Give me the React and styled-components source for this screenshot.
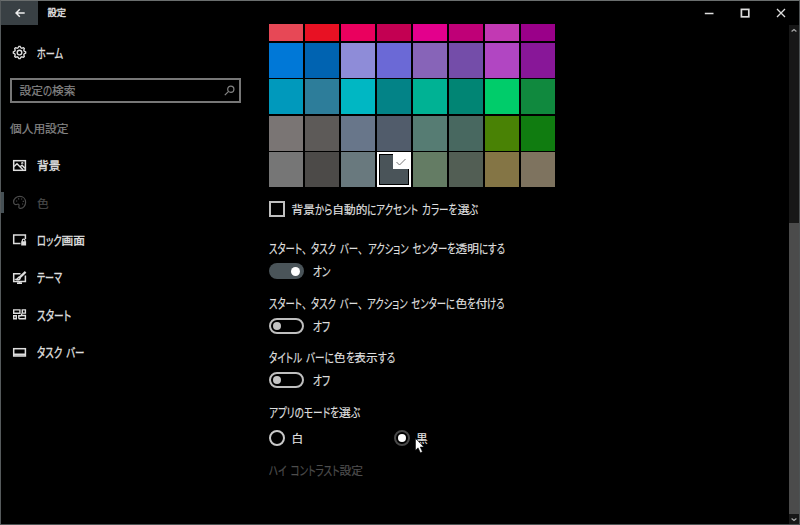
import React, { useLayoutEffect, useRef } from "react";
import styled, { createGlobalStyle } from "styled-components";

const Global = createGlobalStyle`
  * { box-sizing: border-box; }
  body { margin: 0; background: #000; overflow: hidden; }
`;

const Window = styled.div`
  width: 800px;
  height: 525px;
  display: flex;
  flex-direction: column;
  background: #000;
  color: #dedede;
  border: 1px solid #4d5253;
  border-top-color: #6a6e6e;
  border-left-color: #555a5c;
  font-family: "Noto Sans CJK JP", sans-serif;
  font-size: 11.7px;
  line-height: 16px;
  overflow: hidden;
  cursor: default;
`;

const TitleBar = styled.header`
  height: 23px;
  flex: none;
  display: flex;
  align-items: flex-start;
`;

const BackButton = styled.button`
  width: 37px;
  height: 24px;
  padding: 0;
  border: 0;
  background: #394044;
  display: grid;
  place-items: center;
`;

const WindowTitle = styled.div`
  margin: 3px 0 0 9.5px;
  flex: 1;
  font-size: 9.3px;
`;

const CaptionButton = styled.button`
  width: 36px;
  height: 24px;
  padding: 0;
  border: 0;
  background: none;
  display: grid;
  place-items: center;
`;

const Body = styled.div`
  flex: 1;
  min-height: 0;
  display: flex;
`;

const Sidebar = styled.nav`
  width: 268px;
  flex: none;
  padding-top: 10px;
`;

const NavItem = styled.div`
  height: 37.4px;
  display: flex;
  align-items: center;
  gap: 10px;
  padding-left: 8px;
  border-left: 3px solid transparent;
  border-image: ${(p) =>
    p.$active
      ? "linear-gradient(transparent 24%, #465055 24%, #465055 76%, transparent 76%) 1"
      : "none"};
  color: ${(p) => (p.$active ? "#4b4b4b" : "#dedede")};

  svg { width: 15px; height: 15px; flex: none; }
`;

const SearchBox = styled.div`
  width: 231px;
  height: 25px;
  margin: 6.6px 0 0 9px;
  padding: 0 4px 0 7.5px;
  border: 2px solid #777;
  display: flex;
  align-items: center;
  justify-content: space-between;
  color: #858585;
`;

const SectionTitle = styled.div`
  margin: 17px 0 10.5px 9px;
  color: #858585;
`;

const Content = styled.main`
  width: 520px;
  flex: none;
  overflow: hidden;
`;

const Palette = styled.div`
  width: 286px;
  display: grid;
  grid-template-columns: repeat(8, 1fr);
  grid-template-rows: 17px repeat(4, 35px);
  gap: 1.5px;
`;

const Swatch = styled.div`
  background: ${(p) => p.$color};
  ${(p) => p.$selected && "border: 2px solid #fff; outline: 1px solid #000; outline-offset: -3px;"}
  display: flex;
  justify-content: flex-end;
  align-items: flex-start;
`;

const CheckCorner = styled.span`
  width: 16px;
  height: 15px;
  background: #fff;
  display: grid;
  place-items: center;
  z-index: 1;
`;

const CheckRow = styled.label`
  height: 16px;
  margin: 14px 0 23px;
  display: flex;
  align-items: center;
  gap: 6.5px;
`;

const CheckBox = styled.span`
  width: 16px;
  height: 16px;
  border: 2px solid #bfbfbf;
`;

const Setting = styled.section`
  height: 54.5px;
`;

const ToggleRow = styled.div`
  display: flex;
  align-items: center;
  height: 16px;
  gap: 9px;
  margin-top: 7px;
`;

const Toggle = styled.span`
  width: 35px;
  height: 16px;
  border-radius: 8px;
  display: flex;
  align-items: center;
  justify-content: ${(p) => (p.$on ? "flex-end" : "flex-start")};
  padding: 0 ${(p) => (p.$on ? "4px" : "2px")};
  background: ${(p) => (p.$on ? "#4a5459" : "transparent")};
  border: ${(p) => (p.$on ? "0" : "2px solid #bfbfbf")};

  &::after {
    content: "";
    width: ${(p) => (p.$on ? 9 : 8)}px;
    height: ${(p) => (p.$on ? 9 : 8)}px;
    border-radius: 50%;
    background: ${(p) => (p.$on ? "#fff" : "#c4c4c4")};
  }
`;

const Radios = styled.div`
  display: flex;
  margin-top: 10px;
`;

const RadioItem = styled.label`
  width: 124.5px;
  height: 16px;
  display: flex;
  align-items: center;
  gap: 6.5px;
  position: relative;
`;

const Radio = styled.span`
  width: 16px;
  height: 16px;
  border-radius: 50%;
  border: 2px solid ${(p) => (p.$checked ? "#484848" : "#c9c9c9")};
  display: grid;
  place-items: center;

  &::after {
    content: "";
    width: 8px;
    height: 8px;
    border-radius: 50%;
    background: ${(p) => (p.$checked ? "#fff" : "transparent")};
  }
`;

const Pointer = styled.svg`
  position: absolute;
  left: 21px;
  top: 8px;
  width: 10px;
  height: 16px;
`;

const ContrastLink = styled.div`
  margin-top: 16px;
  color: #4e4e4e;
`;

const ScrollBar = styled.div`
  width: 10px;
  margin-top: 1px;
  display: flex;
  flex-direction: column;
  background: #171717;
`;

const ScrollArrow = styled.span`
  height: 10px;
  display: grid;
  place-items: center;
  background: #171717;
`;

const ScrollThumb = styled.span`
  flex: 1;
  margin-top: 188px;
  background: #4b4b4b;
`;

const TextLine = styled.span`
  display: flex;
  width: ${(p) => p.$width}px;
  white-space: pre;
  height: 16px;
  -webkit-text-stroke: ${(p) => (p.$heavy ? 0.4 : 0.22)}px currentColor;
`;

const Run = styled.span`
  display: block;
  flex: none;
  transform-origin: 0 50%;
  ${(p) => p.$kana && "font-size: 12.7px; word-spacing: 2.5px;"}
  font-feature-settings: ${(p) => (p.$tight ? '"palt"' : "normal")};
`;

// UI Japanese typesetting: ideographs keep their full width, kana and
// punctuation are condensed so that the line takes exactly the given width.
function Text({ children, width, heavy }) {
  const line = useRef(null);
  const runs = children.match(/、|[\u3003-\u30ff ]+|[^\u3000-\u30ff ]+/g);
  useLayoutEffect(() => {
    const kana = [];
    let fixed = 0;
    let loose = 0;
    for (const el of line.current.children) {
      el.style.width = "auto";
      el.style.transform = "none";
      const w = el.getBoundingClientRect().width;
      if (el.dataset.kana) {
        kana.push([el, w]);
        loose += w;
      } else fixed += w;
    }
    const scale = loose ? (width - fixed) / loose : 1;
    for (const [el, w] of kana) {
      el.style.width = `${w * scale}px`;
      el.style.transform = `scaleX(${scale})`;
    }
  }, [children, width]);
  return (
    <TextLine ref={line} $width={width} $heavy={heavy}>
      {runs.map((r, i) => {
        const kana = /[\u3000-\u30ff ]/.test(r[0]);
        return (
          <Run key={i} $kana={kana} $tight={kana && r !== "、"} data-kana={kana ? "1" : undefined}>
            {r}
          </Run>
        );
      })}
    </TextLine>
  );
}

const Icon = ({ children, w = 1.5 }) => (
  <svg viewBox="0 0 15 15" fill="none" stroke="currentColor" strokeWidth={w}>
    {children}
  </svg>
);

const gearPath = Array.from({ length: 32 }, (_, i) => {
  const r = i % 4 < 2 ? 6.2 : 4.9;
  const a = ((i - 0.5) / 32) * Math.PI * 2;
  return `${i ? "L" : "M"}${(7.5 + r * Math.cos(a)).toFixed(2)} ${(7.5 + r * Math.sin(a)).toFixed(2)}`;
}).join("") + "Z";

const HomeIcon = () => (
  <Icon w={1.35}>
    <path d={gearPath} />
    <circle cx="7.5" cy="7.5" r="2.3" />
  </Icon>
);
const PictureIcon = () => (
  <Icon>
    <rect x="1.7" y="2.7" width="11.7" height="9.6" />
    <path d="M2 8.5 5 5.7l6 6.1M8.2 8.8l1.8-1.6 3 3" />
    <circle cx="10.3" cy="5.2" r=".4" />
  </Icon>
);
const PaletteIcon = () => (
  <Icon w={1.2}>
    <path d="M1.6 7C1.6 3.8 4.4 1.4 7.8 1.4s5.8 2.5 5.8 5.8c0 3.4-2.5 6.2-5 6.2-1.8 0-2-1.2-1.6-2.5.4-1.4-.5-2.2-1.7-1.6C3.4 10.1 1.6 9.3 1.6 7Z" />
    <path d="M4 6h1.2M6 3.9h1.2M9 4h1.2M10.700 6.400h1.200M10 9h1.200" />
  </Icon>
);
const LockScreenIcon = () => (
  <Icon>
    <path d="M8.500 11.500H1.700V2.900h11.700v4" />
    <rect x="9.200" y="9.300" width="4.900" height="4.200" fill="currentColor" stroke="none" />
    <path d="M10.300 10V8.400c0-1.700 2.700-1.700 2.700 0V10" strokeWidth="1.200" />
  </Icon>
);
const ThemeIcon = () => (
  <Icon>
    <path d="M8.500 3.700H1.700v7.700h11.700V5.500M5 13.200h5M7.500 11v2" />
    <path d="m13.600 1.900-6.600 6.200" strokeWidth="2.200" />
    <path d="M7.300 7.200c-1.600 0-1.200 1.800-3.300 2.200 2 .9 4 .4 4.300-1.200" />
  </Icon>
);
const StartIcon = () => (
  <Icon w={1.4}>
    <path d="M1.700 6.300V2.900h6.200v3.400ZM1.700 8.700h2.600v3H1.700ZM6.800 11.700v-3h2.400M10.300 2.900h3.100v3.200h-3.100ZM6.800 11.700h6.600v-3.200H9.600v-2" />
  </Icon>
);
const TaskbarIcon = () => (
  <Icon>
    <rect x="1.700" y="3.700" width="11.700" height="7.300" />
    <path d="M2 9.500h11.500" strokeWidth="2" />
  </Icon>
);

const navItems = [
  ["背景", 23.6, PictureIcon],
  ["色", 12, PaletteIcon, true],
  ["ロック画面", 48, LockScreenIcon],
  ["テーマ", 25, ThemeIcon],
  ["スタート", 34, StartIcon],
  ["タスク バー", 47.5, TaskbarIcon],
];

const colors = [
  "#e74856", "#e81123", "#ea005e", "#c30052", "#e3008c", "#bf0077", "#c239b3", "#9a0089",
  "#0078d7", "#0063b1", "#8e8cd8", "#6b69d6", "#8764b8", "#744da9", "#b146c2", "#881798",
  "#0099bc", "#2d7d9a", "#00b7c3", "#038387", "#00b294", "#018574", "#00cc6a", "#10893e",
  "#7a7574", "#5d5a58", "#68768a", "#515c6b", "#567c73", "#486860", "#498205", "#107c10",
  "#767676", "#4c4a48", "#69797e", "#4a5459", "#647c64", "#525e54", "#847545", "#7e735f",
];
const selectedColor = 35;

const toggles = [
  ["スタート、タスク バー、アクション センターを透明にする", 236, true],
  ["スタート、タスク バー、アクション センターに色を付ける", 236, false],
  ["タイトル バーに色を表示する", 126, false],
];

export default function App() {
  return (
    <Window>
      <Global />
      <TitleBar>
        <BackButton aria-label="戻る">
          <svg width="10" height="10" viewBox="0 0 10 10" fill="none" stroke="#eee" strokeWidth="1.5">
            <path d="M9.7 5H1M4.8 1.200 1 5l3.800 3.800" />
          </svg>
        </BackButton>
        <WindowTitle>
          <Text width={19} heavy>設定</Text>
        </WindowTitle>
        <CaptionButton aria-label="最小化">
          <svg width="10" height="10" viewBox="0 0 10 10" stroke="#ddd" strokeWidth="1.500">
            <path d="M.8 5.500h8.700" />
          </svg>
        </CaptionButton>
        <CaptionButton aria-label="最大化">
          <svg width="10" height="10" viewBox="0 0 10 10" fill="none" stroke="#ddd" strokeWidth="1.700">
            <rect x="1.400" y="1.400" width="7.400" height="7.400" />
          </svg>
        </CaptionButton>
        <CaptionButton aria-label="閉じる">
          <svg width="10" height="10" viewBox="0 0 10 10" stroke="#ddd" strokeWidth="1.300">
            <path d="m1 1 8 8M9 1 1 9" />
          </svg>
        </CaptionButton>
      </TitleBar>
      <Body>
        <Sidebar>
          <NavItem>
            <HomeIcon />
            <Text width={26} heavy>ホーム</Text>
          </NavItem>
          <SearchBox>
            <Text width={56}>設定の検索</Text>
            <svg width="11" height="11" viewBox="0 0 11 11" fill="none" stroke="currentColor" strokeWidth="1.200">
              <circle cx="6.800" cy="4.200" r="3.100" />
              <path d="M4.600 6.400.8 10.200" />
            </svg>
          </SearchBox>
          <SectionTitle>
            <Text width={58}>個人用設定</Text>
          </SectionTitle>
          {navItems.map(([name, width, Glyph, active]) => (
            <NavItem key={name} $active={active}>
              <Glyph />
              <Text width={width} heavy={!active}>{name}</Text>
            </NavItem>
          ))}
        </Sidebar>
        <Content>
          <Palette>
            {colors.map((c, i) => (
              <Swatch key={i} $color={c} $selected={i === selectedColor}>
                {i === selectedColor && (
                  <CheckCorner>
                    <svg width="10" height="8" viewBox="0 0 10 8" fill="none" stroke="#777">
                      <path d="m.5 4 3 3L9.500 1" />
                    </svg>
                  </CheckCorner>
                )}
              </Swatch>
            ))}
          </Palette>
          <CheckRow>
            <CheckBox />
            <Text width={187}>背景から自動的にアクセント カラーを選ぶ</Text>
          </CheckRow>
          {toggles.map(([name, width, on]) => (
            <Setting key={name}>
              <Text width={width}>{name}</Text>
              <ToggleRow>
                <Toggle $on={on} />
                <Text width={on ? 17.5 : 17}>{on ? "オン" : "オフ"}</Text>
              </ToggleRow>
            </Setting>
          ))}
          <Text width={91}>アプリのモードを選ぶ</Text>
          <Radios>
            <RadioItem>
              <Radio />
              <Text width={11}>白</Text>
            </RadioItem>
            <RadioItem>
              <Radio $checked />
              <Text width={11}>黒</Text>
              <Pointer viewBox="0 0 10 16">
                <path d="M.5.500v11.800l2.600-2.500 2.300 5 2-1-2.200-4.800h3.700Z" fill="#fff" stroke="#000" strokeWidth=".5" />
              </Pointer>
            </RadioItem>
          </Radios>
          <ContrastLink>
            <Text width={94}>ハイ コントラスト設定</Text>
          </ContrastLink>
        </Content>
        <ScrollBar>
          <ScrollArrow>
            <svg width="6" height="5" viewBox="0 0 6 5" fill="none" stroke="#aaa" strokeWidth="1.200">
              <path d="m.6 3.500 2.400-2 2.400 2" />
            </svg>
          </ScrollArrow>
          <ScrollThumb />
          <ScrollArrow>
            <svg width="6" height="5" viewBox="0 0 6 5" fill="none" stroke="#aaa" strokeWidth="1.200">
              <path d="m.6 1.500 2.400 2 2.400-2" />
            </svg>
          </ScrollArrow>
        </ScrollBar>
      </Body>
    </Window>
  );
}
